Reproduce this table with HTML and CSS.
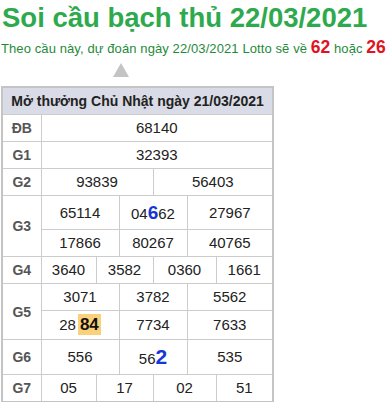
FILE: index.html
```html
<!DOCTYPE html>
<html lang="vi">
<head>
<meta charset="utf-8">
<link rel="stylesheet" href="styles.css">
</head>
<body>
<div class="page">
  <h1 class="title">Soi cầu bạch thủ 22/03/2021</h1>
  <p class="subtitle">Theo cầu này, dự đoán ngày 22/03/2021 Lotto sẽ về <b class="hot">62</b> hoặc <b class="hot">26</b></p>
  <div class="pointer"><span class="arrow"></span></div>
  <table class="kq">
    <colgroup>
      <col class="c-lbl"><col class="c-a"><col class="c-b"><col class="c-c"><col class="c-d"><col class="c-e"><col class="c-f">
    </colgroup>
    <thead>
      <tr><th colspan="7" class="head">Mở thưởng Chủ Nhật ngày 21/03/2021</th></tr>
    </thead>
    <tbody>
      <tr><td class="lbl">ĐB</td><td colspan="6">68140</td></tr>
      <tr><td class="lbl">G1</td><td colspan="6">32393</td></tr>
      <tr><td class="lbl">G2</td><td colspan="3">93839</td><td colspan="3">56403</td></tr>
      <tr><td class="lbl" rowspan="2">G3</td><td colspan="2">65114</td><td colspan="2">04<b class="pick">6</b>62</td><td colspan="2">27967</td></tr>
      <tr><td colspan="2">17866</td><td colspan="2">80267</td><td colspan="2">40765</td></tr>
      <tr><td class="lbl">G4</td><td>3640</td><td colspan="2">3582</td><td colspan="2">0360</td><td>1661</td></tr>
      <tr><td class="lbl" rowspan="2">G5</td><td colspan="2">3071</td><td colspan="2">3782</td><td colspan="2">5562</td></tr>
      <tr><td colspan="2">28<b class="mark">84</b></td><td colspan="2">7734</td><td colspan="2">7633</td></tr>
      <tr><td class="lbl">G6</td><td colspan="2">556</td><td colspan="2">56<b class="pick big">2</b></td><td colspan="2">535</td></tr>
      <tr><td class="lbl">G7</td><td>05</td><td colspan="2">17</td><td colspan="2">02</td><td>51</td></tr>
    </tbody>
  </table>
</div>
</body>
</html>
```

FILE: styles.css
```css
html, body {
  margin: 0;
  padding: 0;
  background: #ffffff;
}
body {
  font-family: "Liberation Sans", Arial, sans-serif;
  color: #222222;
}
.page {
  padding: 0 0 0 1px;
}
.title {
  margin: 0;
  padding: 2px 0 0 1px;
  font-size: 27.5px;
  line-height: 32px;
  font-weight: bold;
  color: #2eaa4e;
}
.subtitle {
  margin: 3px 0 0 0;
  font-size: 13px;
  letter-spacing: 0.1px;
  line-height: 20px;
  color: #1f8a3a;
  white-space: nowrap;
}
.hot {
  color: #e0141e;
  font-size: 17.5px;
  letter-spacing: 0;
}
.pointer {
  display: flex;
  padding-left: 112px;
  margin-top: 4px;
  height: 23px;
}
.arrow {
  width: 0;
  height: 0;
  border-left: 8px solid transparent;
  border-right: 8px solid transparent;
  border-bottom: 14px solid #c4c4c4;
}
.kq {
  border-collapse: collapse;
  table-layout: fixed;
  width: 271px;
  border: 2px solid #c4c4c4;
  font-size: 15px;
}
.c-lbl { width: 39px; }
.c-a { width: 55px; }
.c-b { width: 23px; }
.c-c { width: 34px; }
.c-d { width: 34px; }
.c-e { width: 29px; }
.c-f { width: 57px; }
.kq th, .kq td {
  border: 1px solid #cccccc;
  text-align: center;
  padding: 4px 0;
  line-height: 18px;
  white-space: nowrap;
}
.head {
  background: #d9dbe6;
  font-size: 14px;
  font-weight: bold;
  color: #222222;
}
.lbl {
  font-size: 14px;
  font-weight: bold;
  color: #555555;
}
.pick {
  color: #1537d8;
  font-size: 19px;
  line-height: 25px;
}
.pick.big {
  font-size: 21px;
  line-height: 26px;
}
.mark {
  background: #fbd07a;
  color: #111111;
  font-size: 17px;
  line-height: 20px;
  padding: 1px 2px;
  margin-left: 2px;
}
```
